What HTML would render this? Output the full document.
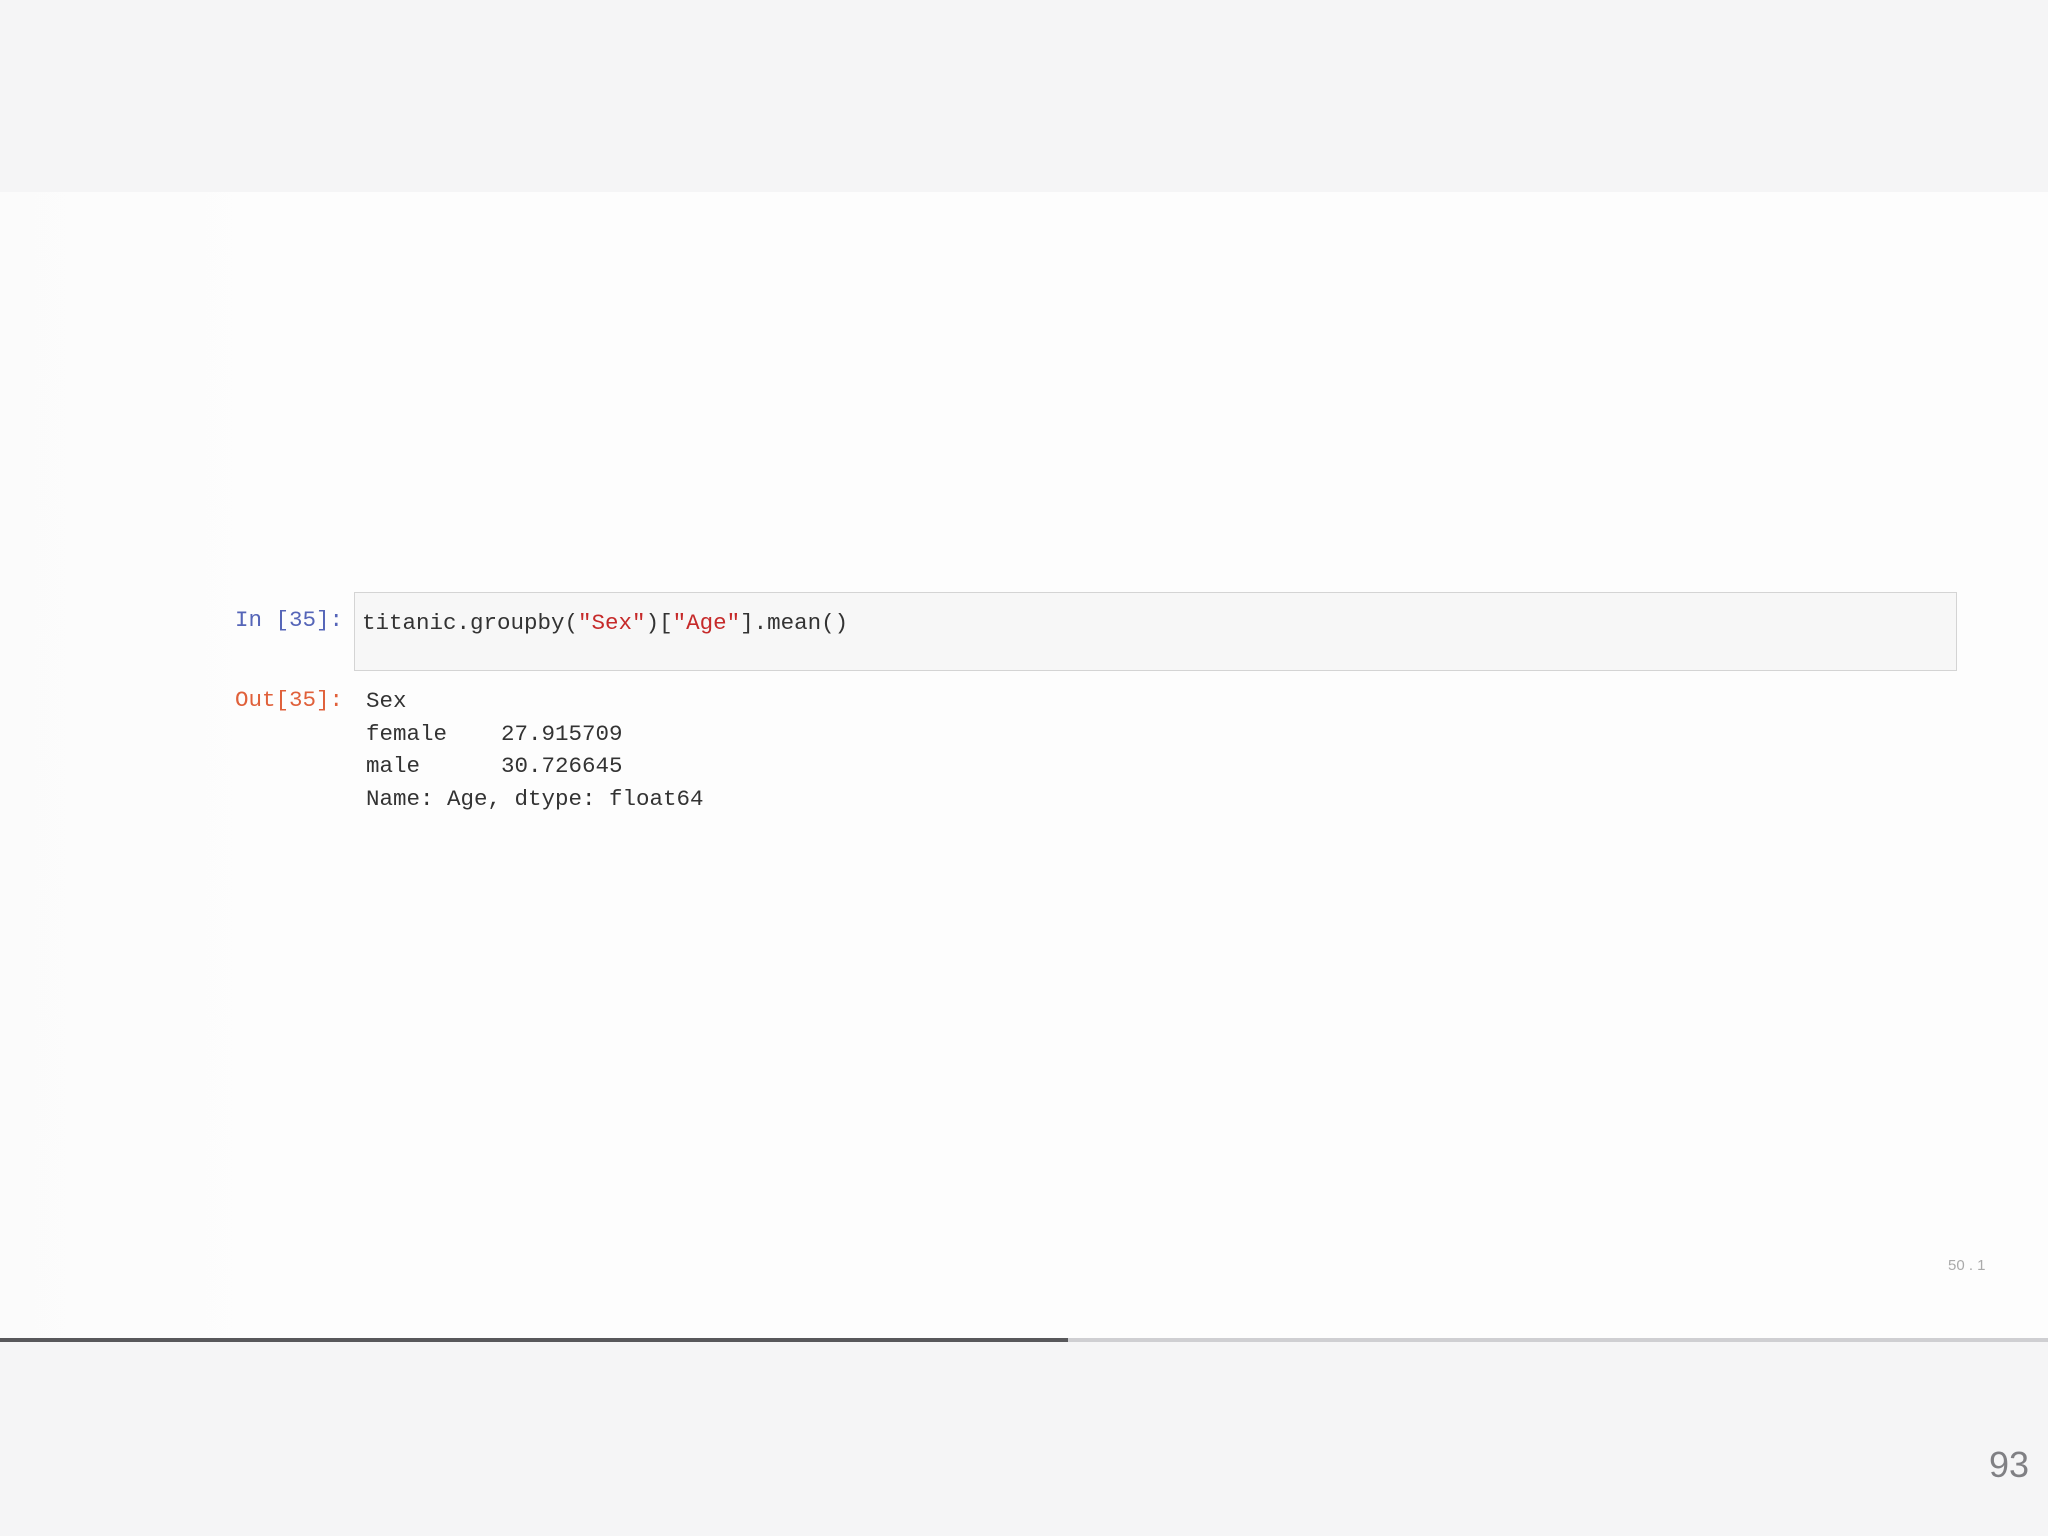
<!DOCTYPE html>
<html><head><meta charset="utf-8"><style>
html,body{margin:0;padding:0;}
body{width:2048px;height:1536px;position:relative;background:#f5f5f6;overflow:hidden;font-family:"Liberation Sans",sans-serif;}
.slide{position:absolute;left:0;top:192px;width:2048px;height:1146px;background:linear-gradient(90deg,#fbfbfb 0,#fdfdfd 270px,#fdfdfd 100%);}
.bar{position:absolute;left:0;top:1338px;width:2048px;height:4px;background:#cfcfd2;}
.bar div{width:1068px;height:100%;background:#58585b;}
.mono{font-family:"Liberation Mono",monospace;font-size:22.5px;position:absolute;white-space:pre;line-height:32.6px;}
.box{position:absolute;left:354px;top:592px;width:1603px;height:79px;background:#f7f7f7;border:1px solid #d4d4d4;box-sizing:border-box;}
.s{color:#c62a2a;}
</style></head><body>
<div class="slide"></div>
<div class="box"></div>
<div class="mono" style="left:235px;top:604px;color:#5565b8;">In [35]:</div>
<div class="mono" style="left:362px;top:607px;color:#333;">titanic.groupby(<span class="s">"Sex"</span>)[<span class="s">"Age"</span>].mean()</div>
<div class="mono" style="left:235px;top:684px;color:#e0603a;">Out[35]:</div>
<div class="mono" style="left:366px;top:685px;color:#333;">Sex
female    27.915709
male      30.726645
Name: Age, dtype: float64</div>
<div style="position:absolute;left:1948px;top:1257px;font-size:15px;color:#aaa;">50 . 1</div>
<div class="bar"><div></div></div>
<div style="position:absolute;left:1989px;top:1444px;font-size:36px;color:#808084;">93</div>
</body></html>
